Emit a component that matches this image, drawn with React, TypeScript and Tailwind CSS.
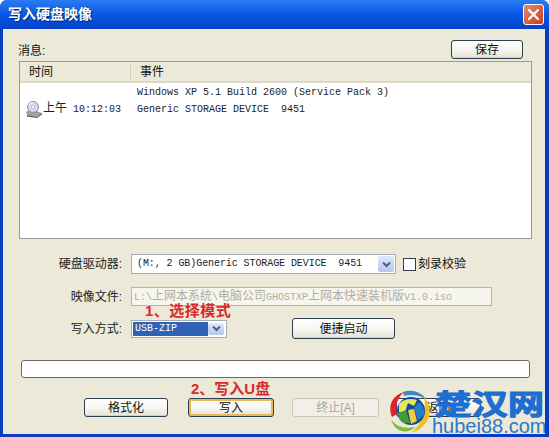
const cn = `font-['Liberation_Sans','Noto_Sans_CJK_SC',sans-serif]`
const mono = `font-['Liberation_Mono','Noto_Sans_CJK_SC',monospace]`

function XpButton({ label, className = "", disabled = false, focused = false }: { label: string; className?: string; disabled?: boolean; focused?: boolean }) {
  if (disabled) {
    return (
      <div className={`flex shrink-0 items-center justify-center rounded-[3px] border border-[#c9c7ba] bg-[#f2f0e6] text-[12px] text-[#a8a698] ${className}`}>
        {label}
      </div>
    )
  }
  return (
    <div
      className={`flex shrink-0 items-center justify-center rounded-[3px] border border-[#2b3f52] bg-gradient-to-b from-white via-[#f7f6f0] to-[#e6e3d6] text-[12px] text-[#111] ${
        focused ? "shadow-[inset_0_0_0_2px_#e8b85c]" : "shadow-[inset_0_-1px_0_#d5d1c2]"
      } ${className}`}
    >
      {label}
    </div>
  )
}

function ComboArrow() {
  return (
    <div className="my-px mr-px flex w-[16px] shrink-0 items-center justify-center rounded-[2px] bg-gradient-to-b from-[#dfe8fb] to-[#b3c6ee]">
      <svg width="9" height="7" viewBox="0 0 9 7">
        <path d="M1 1.5 L4.5 5 L8 1.5" fill="none" stroke="#4d6185" strokeWidth="2" />
      </svg>
    </div>
  )
}

function DriveIcon() {
  return (
    <svg width="18" height="18" viewBox="0 0 18 18" className="shrink-0">
      <path d="M1 12 L6 9 L17 13 L12 17 L2 15 Z" fill="#a0a0a0" />
      <path d="M2 15 L12 17 L17 13 L17 14.5 L12 18 L2 16.5 Z" fill="#555" />
      <circle cx="8" cy="7" r="5.5" fill="#d8d8ea" stroke="#8d8da5" />
      <circle cx="8" cy="7" r="1.6" fill="#fff" stroke="#9a9ab5" strokeWidth="0.6" />
      <path d="M4 5 A5 5 0 0 1 8 2.5" stroke="#fff" strokeWidth="1.2" fill="none" />
    </svg>
  )
}

function Logo() {
  return (
    <svg width="46" height="44" viewBox="0 0 46 44">
      {/* swooshes round the globe */}
      <path d="M4 27 C-1 15 5 5 16 2 C10 7 7 15 9 24 Z" fill="#d9282c" />
      <path d="M15 2 C24 -1 33 2 38 9 C31 5 23 4 16 6 Z" fill="#3f86c8" />
      <path d="M36 7 C44 16 44 29 34 37 C31 40 27 42 24 42 C33 35 39 22 36 7 Z" fill="#eec21c" />
      <path d="M3 29 C8 37 17 39 27 37 C21 44 7 44 3 29 Z" fill="#7fbe3c" />
      {/* globe */}
      <circle cx="23" cy="21" r="14" fill="#16489f" />
      <path d="M11 14 C15 9 23 8 29 10 L26 16 L20 13 L17 22 L11 22 Z" fill="#e2e85f" />
      <path d="M10 23 L18 20 L22 33 L16 33 C12 31 10 27 10 23 Z" fill="#3f9e3a" />
      <path d="M26 18 L31 12 C35 16 37 21 36 25 L30 30 Z" fill="#2a7dc9" />
      <path d="M20 20 L26 19 L29 31 L23 34 Z" fill="#f1cf35" />
    </svg>
  )
}

export default function App() {
  return (
    <div className={`relative flex h-[437px] w-[549px] flex-col overflow-hidden rounded-t-[7px] bg-[#0a3cc0] ${cn}`}>
      {/* title bar */}
      <div className="flex h-[29px] shrink-0 items-center justify-between bg-gradient-to-b from-[#2a7bf0] via-[#0758e6] to-[#0542c8] pl-[8px] pr-[5px]">
        <span className="text-[14px] font-bold text-white [text-shadow:1px_1px_1px_#0a246a]">写入硬盘映像</span>
        <div className="flex h-[21px] w-[21px] items-center justify-center rounded-[3px] border border-white bg-gradient-to-br from-[#e88a6c] to-[#c73a18]">
          <svg width="13" height="13" viewBox="0 0 13 13">
            <path d="M2 2 L11 11 M11 2 L2 11" stroke="#fff" strokeWidth="2.2" strokeLinecap="round" />
          </svg>
        </div>
      </div>

      {/* client area */}
      <div className="ml-[3px] mr-[4px] mb-[3px] flex min-h-0 flex-1 flex-col bg-[#ece9d8] pl-[15px] text-[12px] text-[#111]">
        <div className="flex h-[32px] shrink-0 items-end justify-between pr-[22px]">
          <span className="mb-[2px] text-[12px] leading-[16px]">消息:</span>
          <XpButton label="保存" className="mb-[2px] h-[19px] w-[72px]" />
        </div>

        <div className="ml-[1px] h-[178px] w-[513px] shrink-0 border border-[#9a9a92] bg-white">
          <div className="flex h-[21px] items-center border-b-2 border-[#dcd9c8] bg-[#ece9d8] text-[12px]">
            <span className="w-[110px] pl-[9px]">时间</span>
            <span className="border-l border-[#cfcdbd] pl-[9px] leading-[14px]">事件</span>
          </div>
          <div className={`flex h-[15px] items-center pl-[117px] pt-[4px] text-[10px] leading-[15px] text-[#222] ${mono}`}>
            Windows XP 5.1 Build 2600 (Service Pack 3)
          </div>
          <div className={`mt-[2px] flex h-[18px] items-center pl-[5px] text-[10px] text-[#222] ${mono}`}>
            <DriveIcon />
            <span className="w-[94px] whitespace-pre">
              <span className="text-[12px]">上午</span> 10:12:03
            </span>
            <span className="whitespace-pre">Generic STORAGE DEVICE  9451</span>
          </div>
        </div>

        <div className="mt-[15px] grid shrink-0 grid-cols-[104px_auto] items-center gap-x-[9px] gap-y-[13px]">
          <span className="text-right text-[12px] text-[#222]">硬盘驱动器:</span>
          <div className="flex items-center gap-[7px]">
            <div className="flex h-[20px] w-[265px] items-stretch border border-[#a5aeb8] bg-white">
              <span className={`flex-1 whitespace-pre pl-[5px] text-[10px] leading-[18px] tracking-[-0.08px] text-[#222] ${mono}`}>(M:, 2 GB)Generic STORAGE DEVICE  9451</span>
              <ComboArrow />
            </div>
            <div className="h-[13px] w-[13px] border border-[#2b3f52] bg-white" />
            <span className="-ml-[5px] text-[12px]">刻录校验</span>
          </div>

          <span className="text-right text-[12px] text-[#222]">映像文件:</span>
          <div className={`flex h-[19px] w-[361px] items-center border border-[#b5b5ab] bg-[#f6f5ee] pl-[2px] text-[10px] text-[#b0aea2] ${mono}`}>
            <span className="whitespace-pre">
              L:\<span className="text-[12px]">上网本系统</span>\<span className="text-[12px]">电脑公司</span>GHOSTXP<span className="text-[12px]">上网本快速装机版</span>V1.0.iso
            </span>
          </div>

          <span className="text-right text-[12px] text-[#222]">写入方式:</span>
          <div className="-mt-px flex items-center gap-[65px]">
            <div className="flex h-[18px] w-[96px] items-stretch border border-[#a5aeb8] bg-white p-px">
              <span className={`flex-1 bg-[#2f62b5] pl-[2px] text-[10px] leading-[14px] text-white ${mono}`}>USB-ZIP</span>
              <ComboArrow />
            </div>
            <XpButton label="便捷启动" className="h-[21px] w-[103px]" />
          </div>
        </div>

        <div className="mt-[21px] ml-[3px] h-[18px] w-[509px] shrink-0 rounded-[3px] border border-[#686868] bg-white" />

        <div className="mt-[20px] ml-[66px] flex shrink-0">
          <XpButton label="格式化" className="h-[19px] w-[84px]" />
          <XpButton label="写入" focused className="ml-[20px] h-[19px] w-[86px]" />
          <XpButton label="终止[A]" disabled className="ml-[18px] h-[19px] w-[87px]" />
          <XpButton label="返回" className="ml-[17px] h-[19px] w-[85px]" />
        </div>
      </div>

      {/* annotations pasted over the dialog */}
      <span className="absolute left-[145px] top-[302px] text-[15px] font-bold leading-[18px] tracking-[0.5px] text-[#d92a2e]">1、选择模式</span>
      <span className="absolute left-[191px] top-[380px] text-[15px] font-bold leading-[18px] text-[#d92a2e]">2、写入U盘</span>

      {/* watermark */}
      <div className="absolute left-[388px] top-[390px]">
        <Logo />
      </div>
      <span className="absolute left-[435px] top-[390px] origin-left scale-x-[1.3] text-[28px] font-bold leading-[32px] text-[#1c6fd0] [-webkit-text-stroke:1px_#1c6fd0]">楚汉网</span>
      <span className="absolute left-[432px] top-[415px] text-[20px] leading-[23px] text-[#2a78c8]">hubei88.com</span>
    </div>
  )
}
